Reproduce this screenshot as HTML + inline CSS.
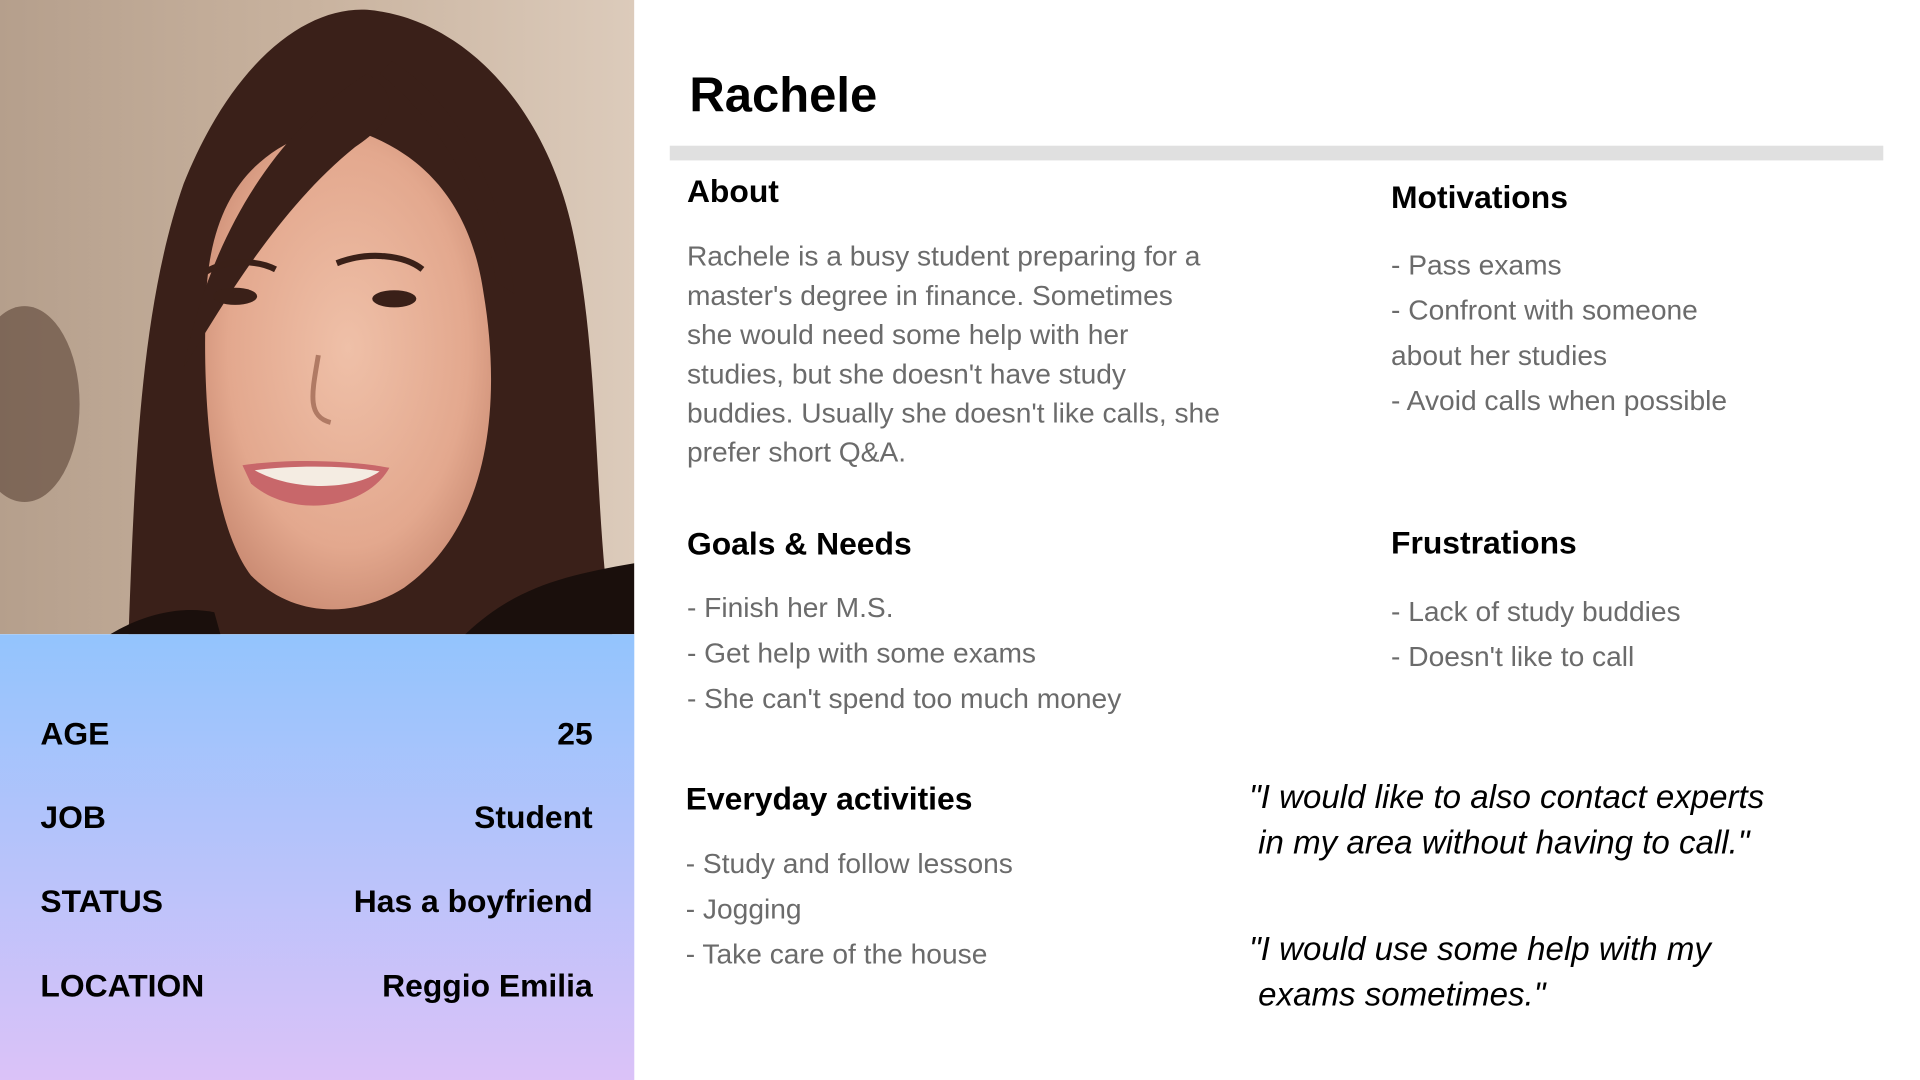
<!DOCTYPE html>
<html><head><meta charset="utf-8">
<style>
html,body{margin:0;padding:0;width:1920px;height:1080px;overflow:hidden;background:#fff}
#w{position:absolute;left:0;top:0;width:1568px;height:882px;transform:scale(1.22449);transform-origin:0 0;font-family:"Liberation Sans",Arial,sans-serif}
.a{position:absolute;white-space:nowrap}
.h{font-weight:bold;font-size:26px;line-height:26px;color:#000}
.b{font-size:23px;color:#6b6b6b}
.l32{line-height:32px}.l37{line-height:37px}
.q{font-style:italic;font-size:27px;line-height:37px;color:#000}
.i{font-weight:bold;font-size:26px;line-height:26px;color:#000}
</style></head><body><div id="w">
<svg class="a" style="left:0;top:0" width="518" height="518" viewBox="0 0 518 518">
<defs>
<linearGradient id="bg" x1="0" y1="0" x2="1" y2="0"><stop offset="0" stop-color="#b59f8c"/><stop offset="0.5" stop-color="#c9b39f"/><stop offset="1" stop-color="#dccbbb"/></linearGradient>
<radialGradient id="sk" cx="0.5" cy="0.45" r="0.6"><stop offset="0" stop-color="#efc0a8"/><stop offset="0.7" stop-color="#e3a88e"/><stop offset="1" stop-color="#c98a72"/></radialGradient>
</defs>
<rect width="518" height="518" fill="url(#bg)"/>
<ellipse cx="20" cy="330" rx="45" ry="80" fill="#5a4236" opacity="0.6"/>
<path d="M105 518 C110 380 115 250 150 150 C190 50 250 5 300 8 C380 15 450 90 470 200 C490 300 485 420 500 518 Z" fill="#3a2019"/>
<path d="M168 250 C170 170 200 130 250 110 L300 110 C350 130 385 170 395 240 C410 330 400 430 330 480 C290 505 240 505 205 470 C175 430 165 340 168 250 Z" fill="url(#sk)"/>
<path d="M150 300 C170 200 220 110 300 60 C330 80 320 100 290 120 C240 160 200 220 175 260 Z" fill="#3a2019"/>
<path d="M310 60 C360 100 395 160 405 230 L420 240 C410 150 370 80 320 50 Z" fill="#3a2019"/>
<path d="M380 518 C420 480 460 470 518 460 L518 518 Z" fill="#1a0f0c"/>
<path d="M90 518 C120 500 150 495 175 500 L180 518 Z" fill="#1a0f0c"/>
<ellipse cx="192" cy="242" rx="18" ry="7" fill="#3a2018"/>
<ellipse cx="322" cy="244" rx="18" ry="7" fill="#3a2018"/>
<path d="M168 222 C185 212 210 212 225 220" stroke="#3a2018" stroke-width="5" fill="none"/>
<path d="M275 215 C300 205 330 208 345 220" stroke="#3a2018" stroke-width="5" fill="none"/>
<path d="M260 290 C255 320 250 340 270 345" stroke="#b07a64" stroke-width="4" fill="none"/>
<path d="M198 380 C230 375 280 375 318 382 C300 415 240 425 205 395 Z" fill="#c8676a"/>
<path d="M208 384 C240 380 280 380 310 385 C290 400 240 402 208 384 Z" fill="#f4ece2"/>
</svg>
<div class="a" style="left:0;top:518px;width:518px;height:364px;background:linear-gradient(#93c4fd,#dbc2f8)"></div>
<div class="a i" style="left:33px;top:586px">AGE</div>
<div class="a i" style="right:1084px;top:586px">25</div>
<div class="a i" style="left:33px;top:654px">JOB</div>
<div class="a i" style="right:1084px;top:654px">Student</div>
<div class="a i" style="left:33px;top:723px">STATUS</div>
<div class="a i" style="right:1084px;top:723px">Has a boyfriend</div>
<div class="a i" style="left:33px;top:792px">LOCATION</div>
<div class="a i" style="right:1084px;top:792px">Reggio Emilia</div>

<div class="a" style="left:563px;top:58px;font-size:40px;line-height:40px;font-weight:bold">Rachele</div>
<div class="a" style="left:547px;top:119px;width:991px;height:12px;background:#e0e0e0"></div>

<div class="a h" style="left:561px;top:143px">About</div>
<div class="a b l32" style="left:561px;top:193px">Rachele is a busy student preparing for a<br>master's degree in finance. Sometimes<br>she would need some help with her<br>studies, but she doesn't have study<br>buddies. Usually she doesn't like calls, she<br>prefer short Q&amp;A.</div>

<div class="a h" style="left:1136px;top:148px">Motivations</div>
<div class="a b l37" style="left:1136px;top:198px">- Pass exams<br>- Confront with someone<br>about her studies<br>- Avoid calls when possible</div>

<div class="a h" style="left:561px;top:431px">Goals &amp; Needs</div>
<div class="a b l37" style="left:561px;top:478px">- Finish her M.S.<br>- Get help with some exams<br>- She can't spend too much money</div>

<div class="a h" style="left:1136px;top:430px">Frustrations</div>
<div class="a b l37" style="left:1136px;top:481px">- Lack of study buddies<br>- Doesn't like to call</div>

<div class="a h" style="left:560px;top:639px">Everyday activities</div>
<div class="a b l37" style="left:560px;top:687px">- Study and follow lessons<br>- Jogging<br>- Take care of the house</div>

<div class="a q" style="left:1020px;top:633px">"I would like to also contact experts<br>&nbsp;in my area without having to call."</div>
<div class="a q" style="left:1020px;top:757px">"I would use some help with my<br>&nbsp;exams sometimes."</div>
</div></body></html>
